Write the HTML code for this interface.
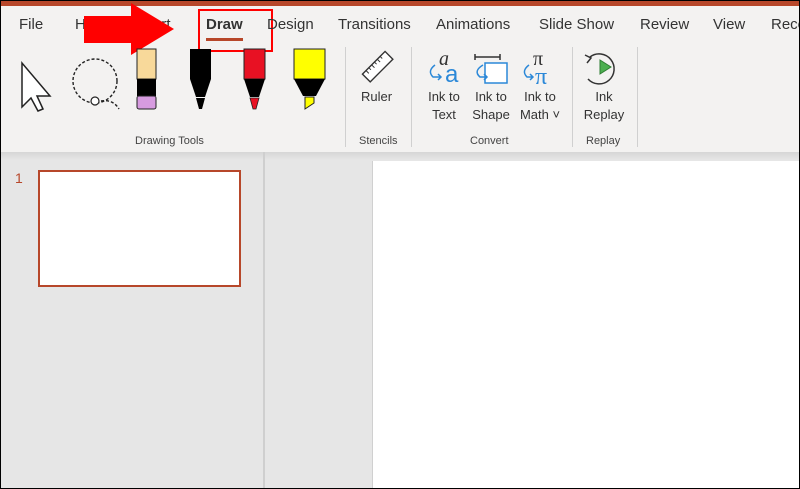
<!DOCTYPE html>
<html><head><style>
body{margin:0;width:800px;height:489px;overflow:hidden;font-family:"Liberation Sans",sans-serif;}
#w{position:relative;width:798px;height:487px;border:1px solid #000;background:#e6e6e6;overflow:hidden}
.a{position:absolute}
.tab{position:absolute;top:15px;font-size:15px;color:#333;white-space:nowrap}
.lbl{position:absolute;font-size:13px;color:#333;text-align:center;line-height:18px;white-space:nowrap}
.grp{position:absolute;top:134px;font-size:11px;color:#444;white-space:nowrap}
.sep{position:absolute;top:46px;width:1px;height:100px;background:#d0d0d0}
</style></head><body><div id="w">
<div class="a" style="left:0;top:0;width:798px;height:5px;background:#b7472a"></div>
<div class="a" style="left:0;top:5px;width:798px;height:146px;background:#f3f2f1"></div>
<div class="a" style="left:0;top:151px;width:798px;height:8px;background:linear-gradient(#d6d6d6,#e6e6e6)"></div>
<div class="tab" style="left:18px">File</div>
<div class="tab" style="left:74px">Home</div>
<div class="tab" style="left:132px">Insert</div>
<div class="tab" style="left:205px;font-weight:bold">Draw</div>
<div class="a" style="left:205px;top:37px;width:37px;height:3px;background:#b7472a"></div>
<div class="a" style="left:197px;top:8px;width:71px;height:39px;border:2px solid #f00"></div>
<div class="tab" style="left:266px">Design</div>
<div class="tab" style="left:337px">Transitions</div>
<div class="tab" style="left:435px">Animations</div>
<div class="tab" style="left:538px">Slide Show</div>
<div class="tab" style="left:639px">Review</div>
<div class="tab" style="left:712px">View</div>
<div class="tab" style="left:770px">Record</div>
<svg class="a" style="left:83px;top:2px" width="92" height="54"><polygon points="0,13 47,13 47,0 90,26 47,52 47,40 0,40" fill="#f00"/></svg>
<svg class="a" style="left:0;top:40px" width="340" height="80">
<path d="M21,22 L21,66 L30,57 L37,70 L42,68 L36,55 L49,55 Z" fill="#fff" stroke="#222" stroke-width="1.5"/>
<circle cx="94" cy="40" r="22" fill="none" stroke="#222" stroke-width="1.4" stroke-dasharray="3,2"/>
<circle cx="94" cy="60" r="4" fill="#fff" stroke="#222" stroke-width="1.2"/>
<path d="M100,60 Q112,58 118,68" fill="none" stroke="#222" stroke-width="1.4" stroke-dasharray="3,2"/>
<rect x="136" y="8" width="19" height="30" fill="#f8d99a" stroke="#222"/>
<rect x="136" y="38" width="19" height="17" fill="#000"/>
<rect x="136" y="55" width="19" height="13" rx="2" fill="#d79be0" stroke="#222"/>
<rect x="189" y="8" width="21" height="30" fill="#000"/>
<path d="M189,38 L210,38 L204,56 L195,56 Z" fill="#000"/><path d="M195,57 L204,57 L201,68 L198,68 Z" fill="#000"/>
<rect x="243" y="8" width="21" height="30" fill="#e81123" stroke="#222"/>
<path d="M243,38 L264,38 L258,56 L249,56 Z" fill="#000"/><path d="M249,57 L258,57 L255,68 L252,68 Z" fill="#e81123" stroke="#222" stroke-width=".8"/>
<rect x="293" y="8" width="31" height="30" fill="#ff0" stroke="#222"/>
<path d="M293,38 L324,38 L315,55 L302,55 Z" fill="#000"/><path d="M304,56 L313,56 L313,62 L304,68 Z" fill="#ff0" stroke="#222"/>
</svg>
<div class="sep" style="left:344px"></div><div class="sep" style="left:410px"></div>
<div class="sep" style="left:571px"></div><div class="sep" style="left:636px"></div>
<svg class="a" style="left:358px;top:48px" width="38" height="36"><g transform="rotate(-45 19 18)"><rect x="3" y="12" width="32" height="11" fill="#fff" stroke="#333" stroke-width="1.4"/><path d="M8,12v4M12,12v3M16,12v4M20,12v3M24,12v4M28,12v3" stroke="#333"/></g></svg>
<div class="lbl" style="left:360px;top:87px">Ruler</div>
<svg class="a" style="left:424px;top:48px" width="200" height="38">
<text x="14" y="16" font-size="20" font-style="italic" font-family="Liberation Serif" fill="#333">a</text>
<text x="20" y="33" font-size="24" font-family="Liberation Sans" fill="#2b88d8">a</text>
<path d="M10,16 Q2,22 8,28 L16,28 M13,25 L16,28 L13,31" fill="none" stroke="#2b88d8" stroke-width="1.5"/>
<path d="M50,5 V11 M50,8 H75 M75,5 V11" stroke="#333" stroke-width="1.5"/>
<rect x="60" y="14" width="22" height="20" fill="#fff" stroke="#2b88d8" stroke-width="1.5"/>
<path d="M58,16 Q48,22 55,28 L62,28 M59,25 L62,28 L59,31" fill="none" stroke="#2b88d8" stroke-width="1.5"/>
<text x="108" y="16" font-size="20" font-family="Liberation Serif" fill="#333">π</text>
<text x="110" y="35" font-size="24" font-family="Liberation Serif" fill="#2b88d8">π</text>
<path d="M104,16 Q96,22 102,28 L108,28 M105,25 L108,28 L105,31" fill="none" stroke="#2b88d8" stroke-width="1.5"/>
<path d="M165,8 A15,15 0 1 1 163,30" fill="none" stroke="#333" stroke-width="1.5"/>
<path d="M160,6 L166,9 L162,14" fill="none" stroke="#333" stroke-width="1.5"/>
<path d="M175,11 L186,18 L175,25 Z" fill="#4caf50" stroke="#2e7d32"/>
</svg>
<div class="lbl" style="left:424px;top:87px;width:38px">Ink to<br>Text</div>
<div class="lbl" style="left:469px;top:87px;width:42px">Ink to<br>Shape</div>
<div class="lbl" style="left:515px;top:87px;width:48px">Ink to<br>Math ˅</div>
<div class="lbl" style="left:580px;top:87px;width:46px">Ink<br>Replay</div>
<div class="grp" style="left:134px">Drawing Tools</div>
<div class="grp" style="left:358px">Stencils</div>
<div class="grp" style="left:469px">Convert</div>
<div class="grp" style="left:585px">Replay</div>
<div class="a" style="left:262px;top:151px;width:2px;height:340px;background:#cfcfcf"></div>
<div class="a" style="left:371px;top:160px;width:1px;height:330px;background:#d0d0d0"></div>
<div class="a" style="left:372px;top:160px;width:430px;height:330px;background:#fff"></div>
<div class="a" style="left:14px;top:169px;font-size:14px;color:#b7472a">1</div>
<div class="a" style="left:37px;top:169px;width:199px;height:113px;border:2px solid #b7472a;background:#fff"></div>
</div></body></html>
